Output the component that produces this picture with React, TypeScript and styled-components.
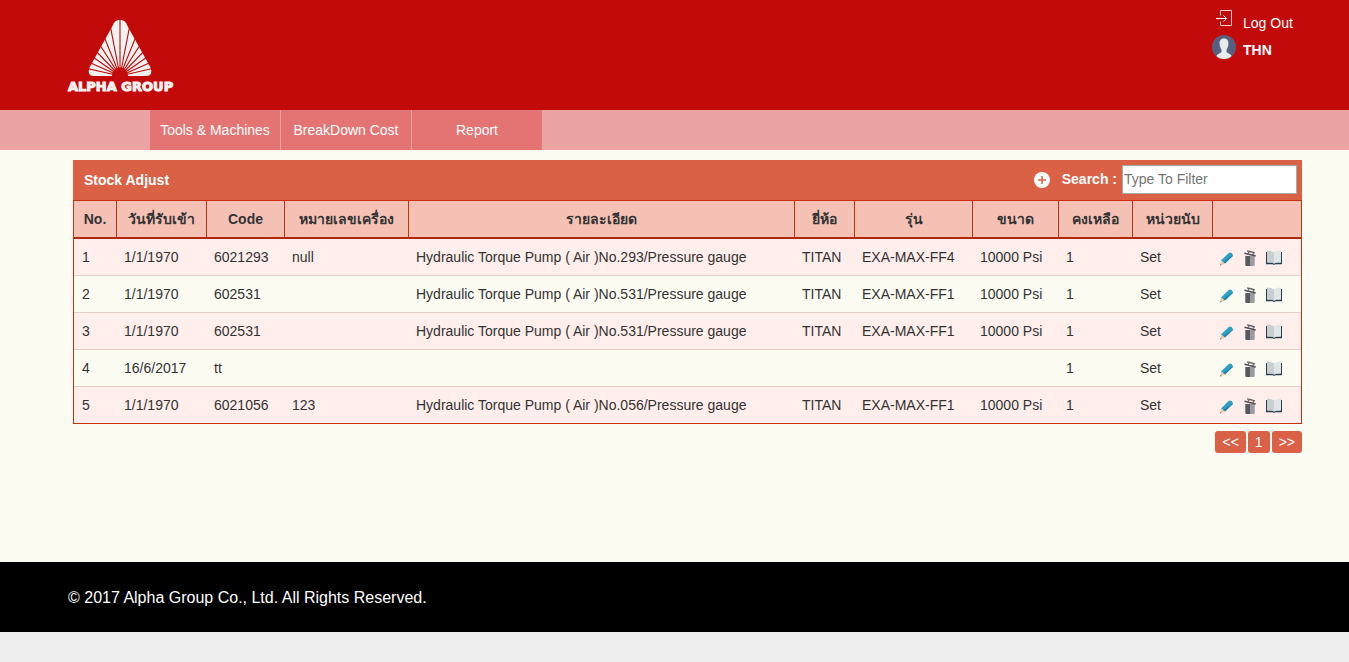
import React, { useState } from "react";
import styled, { createGlobalStyle } from "styled-components";

const GlobalStyle = createGlobalStyle`
  * { box-sizing: border-box; }
  body {
    margin: 0;
    background: #eeeeee;
    font-family: "Liberation Sans", Arial, sans-serif;
    font-size: 14px;
    line-height: 20px;
    color: #333333;
  }
`;

const Header = styled.header`
  display: flex;
  justify-content: space-between;
  align-items: flex-start;
  height: 110px;
  padding: 8px 47px 0 64px;
  background: #c30a0a;
`;

const LogoLink = styled.a`
  display: block;
  height: 88px;
`;

const UserMenu = styled.div`
  display: flex;
  flex-direction: column;
  width: 90px;
  color: #ffffff;
`;

const UserLink = styled.a<{ $bold?: boolean }>`
  display: flex;
  align-items: flex-start;
  gap: 7px;
  height: 27px;
  color: inherit;
  text-decoration: none;
  font-weight: ${(p) => (p.$bold ? "bold" : "normal")};

  span { padding-top: 5px; }
`;

const Nav = styled.nav`
  display: flex;
  gap: 1px;
  height: 40px;
  padding-left: 150px;
  background: #eca4a2;
`;

const NavLink = styled.a`
  width: 130px;
  background: #e47474;
  color: #ffffff;
  line-height: 40px;
  text-align: center;
  text-decoration: none;
`;

const Main = styled.main`
  min-height: 412px;
  padding: 10px 47px 10px 73px;
  background: #fcfcf3;
`;

const TitleBar = styled.div`
  display: flex;
  align-items: center;
  height: 40px;
  padding: 0 5px 0 11px;
  background: #da6145;
  color: #ffffff;
`;

const Title = styled.h1`
  flex: 1;
  margin: 0;
  font-size: 14px;
  font-weight: bold;
`;

const IconButton = styled.button`
  display: block;
  width: 16px;
  height: 16px;
  padding: 0;
  border: 0;
  background: none;
  cursor: pointer;

  svg { display: block; }
`;

const SearchLabel = styled.label`
  display: flex;
  align-items: center;
  gap: 5px;
  margin-left: 12px;
  padding-bottom: 2px;
  font-weight: bold;
`;

const SearchInput = styled.input`
  width: 175px;
  height: 29px;
  padding: 1px;
  border: 1px solid #a9a9a9;
  background: #ffffff;
  font: 14px "Liberation Sans", Arial, sans-serif;

  &::placeholder { color: #757575; }
`;

const Table = styled.table`
  width: 100%;
  table-layout: fixed;
  border: 1px solid #c9300f;
  border-spacing: 0;
`;

const HeadCell = styled.th`
  height: 38px;
  padding: 0;
  border-bottom: 2px solid #b5270f;
  background: #f5c1b5;

  & + & { border-left: 1px solid #c9300f; }
`;

const Row = styled.tr`
  height: 37px;
  &:nth-child(odd) { background: #ffeeeb; }
  td { border-bottom: 1px solid #e5cdc8; }
  &:last-child { height: 36px; }
  &:last-child td { border-bottom: 0; }
`;

const Cell = styled.td`
  padding: 0 8px;
  white-space: nowrap;
`;

const ActionCell = styled.td`
  padding: 2px 6px 0;
`;

const Actions = styled.div`
  display: flex;
  gap: 8px;
`;

const Pager = styled.nav`
  display: flex;
  justify-content: flex-end;
  gap: 2px;
  margin-top: 7px;
`;

const PageButton = styled.button`
  height: 22px;
  padding: 0 7px;
  border: 0;
  border-radius: 3px;
  background: #da6145;
  color: #ffffff;
  font: 14px "Liberation Sans", Arial, sans-serif;
`;

const Footer = styled.footer`
  height: 70px;
  padding-left: 68px;
  background: #000000;
  color: #ffffff;
  font-size: 16px;
  line-height: 72px;
`;

const rays = [0, 1, 2, 3, 4, 5, 6, 7].flatMap((n) => (n ? [n * 11, -n * 11] : [0]));

const Logo = () => (
  <svg width="116" height="88" viewBox="64 8 116 88" role="img" aria-label="Alpha Group">
    <path
      d="M112.500 26Q114.500 19.700 120 19.700Q125.500 19.700 127.500 26L150.500 67.500Q153.500 76 146 76H94Q86.500 76 89.500 67.500Z"
      fill="#f5f2f2"
    />
    {rays.map((angle) => (
      <line key={angle} x1="120" y1="76" x2="120" y2="15" stroke="#c30a0a" strokeWidth="1.100" transform={`rotate(${angle} 120 76)`} />
    ))}
    <circle cx="120" cy="75.500" r="8" fill="#c30a0a" />
    <text x="68" y="90.500" fill="#f5f2f2" stroke="#f5f2f2" strokeWidth="1" fontFamily="DejaVu Sans, sans-serif" fontWeight="700" fontSize="13">
      ALPHA GROUP
    </text>
  </svg>
);

const LogOutIcon = () => (
  <svg width="24" height="24" viewBox="1212 8 24 24" fill="none" stroke="#f3c9c9" strokeWidth="1" aria-hidden="true">
    <path d="M1220.500 15.500V10.500H1231.500V25.500H1220.500V21.500" />
    <path d="M1216 18.500H1226.500M1223.500 15.500L1226.500 18.500L1223.500 21.500" stroke="#ffffff" />
  </svg>
);

const AvatarIcon = () => (
  <svg width="24" height="24" viewBox="0 0 24 24" aria-hidden="true">
    <clipPath id="avatar"><circle cx="12" cy="12" r="12" /></clipPath>
    <g clipPath="url(#avatar)">
      <rect width="24" height="24" fill="#556080" />
      <path d="M12 3.500C8.500 3.500 7.300 6 7.600 9C7.700 12 8.700 13 9.500 14.500V17L5 20Q4 21 4 24H20Q20 21 19 20L14.500 17V14.500C15.300 13 16.300 12 16.400 9C16.700 6 15.500 3.500 12 3.500Z" fill="#e7eceb" />
    </g>
  </svg>
);

const AddIcon = () => (
  <svg width="16" height="16" viewBox="0 0 16 16" aria-hidden="true">
    <circle cx="8" cy="8" r="8" fill="#ffffff" />
    <path d="M8 4V12M4 8H12" stroke="#da6145" strokeWidth="1.500" />
  </svg>
);

const PencilIcon = () => (
  <svg width="16" height="16" viewBox="0 0 16 16" aria-hidden="true">
    <path d="M3 10.500L10.500 3.200Q12 2 13.500 3Q15.500 4.500 14.500 6.200L7 13.500Z" fill="#2da0c4" />
    <path d="M5 12L14.800 5.200Q15 6 14.500 6.200L7 13.500Z" fill="#1b86ad" />
    <path d="M3 10.500L7 13.500L2.400 15.500Z" fill="#f2c5ab" />
    <path d="M2.600 14L3.600 15L2.200 15.500Z" fill="#4b4b55" />
  </svg>
);

const TrashIcon = () => (
  <svg width="16" height="16" viewBox="0 0 16 16" aria-hidden="true">
    <path d="M3.300 6H8.300V16H4.300Q3.300 16 3.300 15Z" fill="#58595e" />
    <path d="M8 6H12.700V15Q12.700 16 11.700 16H8Z" fill="#9a9aa2" />
    <path d="M2.500 3.200L13.700 6" stroke="#4d4d52" strokeWidth="1.700" />
    <path d="M5 .8L13 2.800M6 3.500L7.500 1.200L11.500 2.400L11 5" stroke="#626267" strokeWidth="1.200" fill="none" />
  </svg>
);

const BookIcon = () => (
  <svg width="16" height="16" viewBox="0 .5 16 16" aria-hidden="true">
    <path d="M0 2.500H1.500V13H6L8 14L10 13H14.500V2.500H16V14.700H9.300L8 15.500L6.700 14.700H0Z" fill="#2b3e50" />
    <path d="M1 1Q5 .8 8 3V14Q5.500 12.500 1 13Z" fill="#c9cfd1" />
    <path d="M15 1Q11 .8 8 3V14Q10.500 12.500 15 13Z" fill="#e0e5e7" />
  </svg>
);

const columns: { title: string; width?: number }[] = [
  { title: "No.", width: 42 },
  { title: "วันที่รับเข้า", width: 90 },
  { title: "Code", width: 78 },
  { title: "หมายเลขเครื่อง", width: 124 },
  { title: "รายละเอียด" },
  { title: "ยี่ห้อ", width: 60 },
  { title: "รุ่น", width: 118 },
  { title: "ขนาด", width: 86 },
  { title: "คงเหลือ", width: 74 },
  { title: "หน่วยนับ", width: 80 },
  { title: "", width: 89 },
];

const stock: string[][] = [
  ["1", "1/1/1970", "6021293", "null", "Hydraulic Torque Pump ( Air )No.293/Pressure gauge", "TITAN", "EXA-MAX-FF4", "10000 Psi", "1", "Set"],
  ["2", "1/1/1970", "602531", "", "Hydraulic Torque Pump ( Air )No.531/Pressure gauge", "TITAN", "EXA-MAX-FF1", "10000 Psi", "1", "Set"],
  ["3", "1/1/1970", "602531", "", "Hydraulic Torque Pump ( Air )No.531/Pressure gauge", "TITAN", "EXA-MAX-FF1", "10000 Psi", "1", "Set"],
  ["4", "16/6/2017", "tt", "", "", "", "", "", "1", "Set"],
  ["5", "1/1/1970", "6021056", "123", "Hydraulic Torque Pump ( Air )No.056/Pressure gauge", "TITAN", "EXA-MAX-FF1", "10000 Psi", "1", "Set"],
];

export default function App() {
  const [filter, setFilter] = useState("");
  const rows = stock.filter((row) => row.join(" ").toLowerCase().includes(filter.toLowerCase()));

  return (
    <>
      <GlobalStyle />
      <Header>
        <LogoLink href="#"><Logo /></LogoLink>
        <UserMenu>
          <UserLink href="#"><LogOutIcon /><span>Log Out</span></UserLink>
          <UserLink href="#" $bold><AvatarIcon /><span>THN</span></UserLink>
        </UserMenu>
      </Header>
      <Nav>
        <NavLink href="#">Tools &amp; Machines</NavLink>
        <NavLink href="#">BreakDown Cost</NavLink>
        <NavLink href="#">Report</NavLink>
      </Nav>
      <Main>
        <TitleBar>
          <Title>Stock Adjust</Title>
          <IconButton type="button" aria-label="Add"><AddIcon /></IconButton>
          <SearchLabel>
            Search :
            <SearchInput type="text" placeholder="Type To Filter" value={filter} onChange={(e) => setFilter(e.target.value)} />
          </SearchLabel>
        </TitleBar>
        <Table>
          <colgroup>
            {columns.map((c, i) => <col key={i} width={c.width} />)}
          </colgroup>
          <thead>
            <tr>{columns.map((c, i) => <HeadCell key={i} scope="col">{c.title}</HeadCell>)}</tr>
          </thead>
          <tbody>
            {rows.map((row) => (
              <Row key={row[0]}>
                {row.map((value, i) => <Cell key={i}>{value}</Cell>)}
                <ActionCell>
                  <Actions>
                    <IconButton type="button" aria-label="Edit"><PencilIcon /></IconButton>
                    <IconButton type="button" aria-label="Delete"><TrashIcon /></IconButton>
                    <IconButton type="button" aria-label="Details"><BookIcon /></IconButton>
                  </Actions>
                </ActionCell>
              </Row>
            ))}
          </tbody>
        </Table>
        <Pager aria-label="Pages">
          <PageButton type="button">&lt;&lt;</PageButton>
          <PageButton type="button">1</PageButton>
          <PageButton type="button">&gt;&gt;</PageButton>
        </Pager>
      </Main>
      <Footer>© 2017 Alpha Group Co., Ltd. All Rights Reserved.</Footer>
    </>
  );
}
